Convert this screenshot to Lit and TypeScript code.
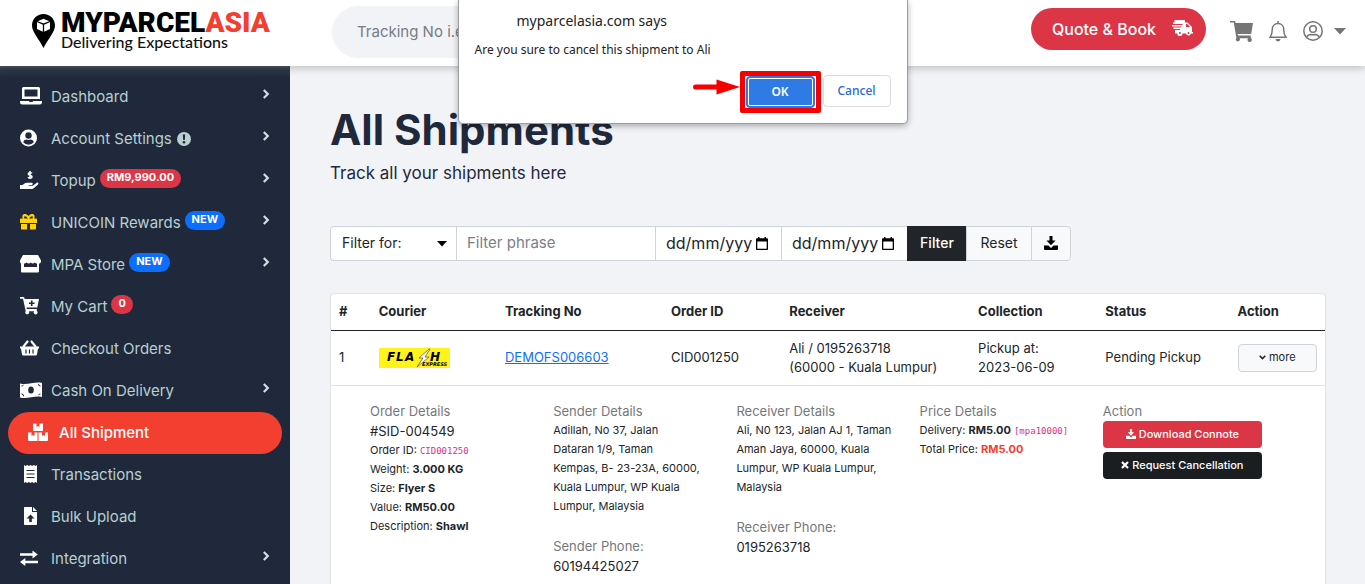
import { LitElement, html, svg, css, nothing } from "lit";
import { customElement, property } from "lit/decorators.js";
import { classMap } from "lit/directives/class-map.js";

const icons: Record<string, unknown> = {
  laptop: svg`<path fill-rule="evenodd" d="M3.500 1h15a1.500 1.500 0 0 1 1.500 1.500V13H2V2.500A1.500 1.500 0 0 1 3.500 1zM4.500 3.500v7h13v-7z"/><path d="M0 15h9c0 .8.500 1 1 1h2c.6 0 1-.3 1-1h9v1a2.500 2.500 0 0 1-2.500 2.500h-17A2.500 2.500 0 0 1 0 16z"/>`,
  user: svg`<circle cx="8.500" cy="10" r="8.500"/><circle cx="8.500" cy="7.500" r="3.200" fill="#1f293b"/><path fill="#1f293b" d="M3.200 14.300c.5-2 1.900-2.700 3.300-2.700.7.300 1.300.4 2 .4s1.300-.1 2-.4c1.400 0 2.800.7 3.300 2.700a7 7 0 0 1-10.600 0z"/>`,
  hand: svg`<path d="M0 13h2.600l1.500-1.200c.9-.7 1.900-1 3-1h4.600c1.400 0 1.500 2 .1 2.200H8.700v.8h4.200l3.600-2.900c1.400-.9 2.700.6 1.500 1.700l-4.300 3.700c-.5.500-1.100.7-1.800.7H0z" transform="translate(0 2)"/><path d="M12 3.300c-.5-.7-3.600-1.200-3.800.5-.2 1.800 3.900 1 3.800 3-.2 1.800-3.300 1.400-4.100.5M10 1v8" fill="none" stroke="#fff" stroke-width="1.500"/>`,
  gift: svg`<g fill="#ffd20a"><path fill-rule="evenodd" d="M1 6.500h1.800C1 2.500 5 .3 8.500 4 12 .3 16 2.500 14.200 6.500H16c.6 0 1 .4 1 1V11H0V7.500c0-.6.400-1 1-1zm3.500 0h3.200C6 3.200 3 3.700 4.500 6.500zm4.800 0h3.200c1.500-2.800-1.500-3.300-3.200 0z"/><path d="M1 12h6v5.500H2c-.6 0-1-.4-1-1zM10 12h6v4.500c0 .6-.4 1-1 1h-5z"/></g>`,
  store: svg`<path d="M3 1h15l3 5.500c.3 1.800-.5 3-2 3.200V17c0 .8-.5 1.500-1.500 1.500H2.500C1.500 18.500 1 18 1 17V9.500C0 9 0 8 0 6.500z"/><path fill="#1f293b" d="M4 9.500c1.200 0 2-.5 2.500-1 1.600 1.300 3 1.300 4.200 0 1.300 1.300 2.700 1.300 4 0 .6.600 1.300 1 2.300 1V13H4z"/>`,
  cartPlus: svg`<path d="M0 1h3.500c.4 0 .8.300.9.700L4.600 3H19l-1.700 8.500H6.500l.3 1.500H17l-.3 1.800a2 2 0 1 1-2.700.5H9a2 2 0 1 1-3.300-.3L3 2.800H0z"/><path d="M11.700 4.500v5.500M9 7.300h5.500" stroke="#1f293b" stroke-width="1.600"/>`,
  basket: svg`<path d="M0 8.500h19v2h-1l-1 6c-.2.600-.6 1-1.200 1H3.200c-.6 0-1-.4-1.200-1l-1-6H0z"/><path d="M3.500 8.500 7.500 3.500M15.500 8.500 11.500 3.500" stroke="#fff" stroke-width="2.200" stroke-linecap="round"/><path d="M6 11.500v4M9.500 11.500v4M13 11.500v4" stroke="#1f293b" stroke-width="1.200"/>`,
  money: svg`<path d="M0 3.500c7.500 2.200 14.500-2.300 22-.5v14c-7.500-1.800-14.500 2.500-22 .5z"/><ellipse cx="11" cy="10" rx="2.800" ry="3.600" fill="#1f293b"/><path d="M1.500 6a2 2 0 0 0 2-1.300M20.500 14a2 2 0 0 0-2 1.200M1.500 14a2 2 0 0 1 2 2.300M20.500 6a2 2 0 0 1-2-2.100" stroke="#1f293b" fill="none"/>`,
  boxes: svg`<path d="M5 1.500h3.500V5l1.500-1 1.500 1V1.500H15v7.500H5zM0 10.500h3.500V14L5 13l1.500 1v-3.500h3V19H1a1 1 0 0 1-1-1zM10.500 10.500H14V14l1.500-1 1.500 1v-3.500h3V18a1 1 0 0 1-1 1h-8.500z"/>`,
  receipt: svg`<path d="M4 1l1.600 1 1.600-1 1.700 1 1.600-1 1.600 1 1.700-1 1.600 1L17 1v18l-1.600-1-1.600 1-1.700-1-1.600 1-1.600-1-1.700 1-1.600-1L4 19z"/><path d="M6.500 6.500h8M6.500 10h8M6.500 13.500h8" stroke="#1f293b" stroke-width="1.200"/>`,
  file: svg`<path d="M5 1h7v5h5v12c0 .6-.4 1-1 1H5c-.6 0-1-.4-1-1V2c0-.6.400-1 1-1z"/><path d="M13 1l4 4h-4z"/><path fill="#1f293b" d="M10.500 8.500l4 4h-2.700V16H9.200v-3.500H6.500z"/>`,
  exchange: svg`<path d="M0 5.200h12.500V2.500l5.300 4-5.300 4V7.800H0zM18 12.700H5.300V10L0 14l5.300 4v-2.700H18z"/>`,
};

interface NavEntry {
  icon: string;
  label: string;
  badge?: string;
  tone?: string;
  info?: boolean;
  more?: boolean;
  active?: boolean;
}

const navEntries: NavEntry[] = [
  { icon: "laptop", label: "Dashboard", more: true },
  { icon: "user", label: "Account Settings", info: true, more: true },
  { icon: "hand", label: "Topup", badge: "RM9,990.00", tone: "red", more: true },
  { icon: "gift", label: "UNICOIN Rewards", badge: "NEW", tone: "blue", more: true },
  { icon: "store", label: "MPA Store", badge: "NEW", tone: "blue", more: true },
  { icon: "cartPlus", label: "My Cart", badge: "0", tone: "red" },
  { icon: "basket", label: "Checkout Orders" },
  { icon: "money", label: "Cash On Delivery", more: true },
  { icon: "boxes", label: "All Shipment", active: true },
  { icon: "receipt", label: "Transactions" },
  { icon: "file", label: "Bulk Upload" },
  { icon: "exchange", label: "Integration", more: true },
];

const downloadIcon = (cls: string) => html`<svg class=${cls} viewBox="0 0 14 14" aria-hidden="true">
  <path fill="currentColor" d="M5.500 0h3v4.500h3L7 9.300 2.500 4.500h3zM0 9.500h4.500L7 12l2.500-2.500H14V13a1 1 0 0 1-1 1H1a1 1 0 0 1-1-1z" />
</svg>`;

@customElement("side-nav")
class SideNav extends LitElement {
  static styles = css`
    :host {
      display: block;
      background: linear-gradient(#4d5866, #2d3848 4px, #1f293b 12px);
      padding-top: 10px;
      font-size: 15px;
    }
    .item {
      display: flex;
      align-items: center;
      height: 42px;
      padding: 0 20px;
      color: #b9cfd0;
      text-decoration: none;
    }
    .active {
      margin: 0 8px;
      border-radius: 21px;
      background: #f33f30;
      color: #fff;
      font-weight: 500;
    }
    .icon {
      width: 22px;
      height: 20px;
      margin: 0 9px 2px 0;
      fill: #fff;
    }
    .label { margin-bottom: 1px; }
    .info {
      width: 14px;
      height: 14px;
      margin-left: 5px;
    }
    .badge {
      height: 19px;
      margin: 0 0 6px 4px;
      padding: 0 7px;
      border-radius: 10px;
      color: #fff;
      font-size: 11px;
      font-weight: 700;
      line-height: 17px;
    }
    .red { background: #dc3545; }
    .blue { background: #0d6efd; }
    .chevron {
      width: 8px;
      height: 10px;
      margin: 0 0 6px auto;
    }
  `;

  render() {
    return html`<nav aria-label="Main">
      ${navEntries.map(
        (n) => html`<a href="#" class=${classMap({ item: true, active: !!n.active })}>
          <svg class="icon" viewBox="0 0 22 20" aria-hidden="true">${icons[n.icon]}</svg>
          <span class="label">${n.label}</span>
          ${n.info
            ? html`<svg class="info" viewBox="0 0 14 14" aria-hidden="true"><circle cx="7" cy="7" r="7" fill="#b9cfd0" /><path d="M5.800 2.500h2.400l-.4 5.500H6.200z" fill="#1f293b" /><circle cx="7" cy="10.300" r="1.300" fill="#1f293b" /></svg>`
            : nothing}
          ${n.badge ? html`<span class="badge ${n.tone}">${n.badge}</span>` : nothing}
          ${n.more
            ? html`<svg class="chevron" viewBox="0 0 8 10" aria-hidden="true"><path d="M1.800 1l4 4-4 4" fill="none" stroke="#cfe0e2" stroke-width="2.200" /></svg>`
            : nothing}
        </a>`
      )}
    </nav>`;
  }
}

@customElement("top-bar")
class TopBar extends LitElement {
  static styles = css`
    :host {
      display: flex;
      align-items: center;
      height: 66px;
      box-sizing: border-box;
      padding-right: 19px;
      background: #fff;
      box-shadow: 0 2px 8px rgba(0, 0, 0, 0.22);
      z-index: 1;
    }
    .brand {
      display: flex;
      align-items: center;
      width: 300px;
      margin-bottom: 4px;
      padding-left: 32px;
      box-sizing: border-box;
      color: #000;
      text-decoration: none;
    }
    .pin {
      width: 23px;
      height: 35px;
      margin-right: 6px;
    }
    .name {
      display: block;
      font: 900 28px/22px Roboto, sans-serif;
    }
    .asia { color: #f33f30; }
    .tagline {
      display: block;
      font: 500 16px/16px Lato, sans-serif;
      color: #111;
    }
    .search {
      width: 480px;
      height: 52px;
      box-sizing: border-box;
      margin: 0 auto 2px 32px;
      padding: 0 25px 2px;
      border: 0;
      border-radius: 26px;
      background: #f2f3f7;
      font: inherit;
      font-size: 15px;
    }
    .search::placeholder { color: #777c83; }
    .quote {
      display: flex;
      align-items: center;
      height: 42px;
      margin: 0 24px 8px 0;
      padding: 0 13px 0 21px;
      border: 0;
      border-radius: 21px;
      background: #dc3545;
      color: #fff;
      font: inherit;
      font-size: 16px;
      font-weight: 500;
    }
    .truck {
      width: 21px;
      height: 16px;
      margin: 0 0 2px 16px;
    }
    .tool {
      display: flex;
      align-items: center;
      padding: 0;
      border: 0;
      background: none;
      margin: 0 16px 4px 0;
      color: #757575;
    }
    .account { margin-right: 0; }
    .caret { margin-left: 11px; }
  `;

  render() {
    return html`
      <a class="brand" href="#">
        <svg class="pin" viewBox="0 0 23 35" aria-hidden="true">
          <path d="M11.500 0C5 0 0 5 0 11.500 0 18 7 25 11.500 34 16 25 23 18 23 11.500 23 5 18 0 11.500 0z" />
          <path d="M5 7.500l6.500-2.700L18 7.500V15l-6.500 3L5 15z" fill="#fff" />
          <path d="M5 7.500l6.500 2.700L18 7.500M11.500 10.200V18" fill="none" stroke="#000" stroke-width="1.300" />
        </svg>
        <span><span class="name">MYPARCEL<span class="asia">ASIA</span></span><span class="tagline">Delivering Expectations</span></span>
      </a>
      <input class="search" type="search" aria-label="Tracking number" placeholder="Tracking No i.e MPA123456" />
      <button class="quote">
        Quote &amp; Book
        <svg class="truck" viewBox="0 0 21 16" aria-hidden="true">
          <path fill="#fff" d="M2.500 0H12c.6 0 1 .4 1 1v1.500h2.500L20 7v5h1v1.500h-2a2.600 2.600 0 0 1-5 0h-3.500a2.600 2.600 0 0 1-5.200 0H3V10h5V9H1.500V7.500H9v-1H0V5h10.500V4H1V2.500h1.500z" />
          <path fill="#dc3545" d="M14 4h1.200l3 3H14z" /><circle cx="7.900" cy="13" r="1" fill="#dc3545" /><circle cx="16.500" cy="13" r="1" fill="#dc3545" />
        </svg>
      </button>
      <button class="tool" aria-label="Cart">
        <svg width="23" height="21" viewBox="0 0 23 21"><path fill="currentColor" d="M0 0h5l.6 2H23l-1.800 11H7.700l.4 1.500h12.700V17a2.100 2.100 0 1 1-2.600.3H9.600A2 2 0 1 1 6.400 17L3.800 1.500H0z" /></svg>
      </button>
      <button class="tool" aria-label="Notifications">
        <svg width="18" height="21" viewBox="0 0 18 21"><path d="M9 0v2.500M9 2.500c-3.500 0-5.700 2.500-5.700 5.700 0 4.500-1 6.300-2.300 8h16c-1.300-1.700-2.300-3.500-2.300-8 0-3.200-2.200-5.700-5.700-5.700z" fill="none" stroke="currentColor" stroke-width="1.500" /><path d="M6.500 18h5a2.500 2.500 0 0 1-5 0z" fill="currentColor" /></svg>
      </button>
      <button class="tool account" aria-label="Account">
        <svg width="20" height="20" viewBox="0 0 20 20" fill="none" stroke="currentColor" stroke-width="1.500"><circle cx="10" cy="10" r="9.200" /><circle cx="10" cy="8" r="3.300" /><path d="M3.800 16.200c1-2.200 2.600-2.700 4-2.700 1.500.5 2.900.5 4.400 0 1.400 0 3 .5 4 2.700" /></svg>
        <svg class="caret" width="12" height="7" viewBox="0 0 12 7"><path fill="currentColor" d="M0 0h12L6 6.500z" /></svg>
      </button>
    `;
  }
}

@customElement("filter-bar")
class FilterBar extends LitElement {
  static styles = css`
    :host {
      display: flex;
      height: 35px;
      max-width: 741px;
    }
    .cell {
      box-sizing: border-box;
      border: 1px solid #ced4da;
      border-right-width: 0;
      background: #fff;
      color: #212529;
      font: inherit;
      font-size: 14px;
      min-width: 0;
    }
    .pick {
      display: grid;
      align-items: center;
      flex: 0 0 126px;
      border-radius: 4px 0 0 4px;
    }
    .pick > * { grid-area: 1 / 1; }
    .select {
      appearance: none;
      width: 100%;
      height: 100%;
      padding: 0 11px 2px;
      border: 0;
      background: none;
      color: inherit;
      font: inherit;
    }
    .arrow {
      justify-self: end;
      margin-right: 9px;
      pointer-events: none;
    }
    .phrase {
      flex: 1 1 200px;
      padding: 0 10px 2px;
      font-size: 15px;
    }
    .phrase::placeholder { color: #7b8086; }
    .date {
      display: flex;
      align-items: center;
      justify-content: space-between;
      flex: 0 0 126px;
      padding: 0 13px 0 10px;
    }
    .day {
      width: 88px;
      padding: 0 0 2px;
      border: 0;
      background: none;
      font: inherit;
      font-size: 16px;
    }
    .day::placeholder { color: #212529; }
    .go {
      flex: 0 0 59px;
      padding: 0 0 2px;
      background: #212529;
      border-color: #212529;
      color: #fff;
      font-weight: 500;
    }
    .light {
      flex: 0 0 65px;
      padding: 0 0 2px;
      background: #f8f9fa;
    }
    .export {
      flex-basis: 40px;
      border-right-width: 1px;
      border-radius: 0 4px 4px 0;
      color: #000;
    }
    .dl {
      width: 14px;
      height: 14px;
      vertical-align: -2px;
    }
  `;

  private date(label: string) {
    return html`<label class="cell date">
      <input class="day" type="text" aria-label=${label} placeholder="dd/mm/yyy" />
      <svg width="12" height="13" viewBox="0 0 12 13" aria-hidden="true"><path fill-rule="evenodd" d="M0 2.500C0 1.700.5 1.200 1.200 1.200H2V0h1.500v1.200h5V0H10v1.200h.8c.7 0 1.200.5 1.200 1.300V12c0 .6-.4 1-1 1H1c-.6 0-1-.4-1-1zM1.300 4.500v7.200h9.400V4.500z" /></svg>
    </label>`;
  }

  render() {
    return html`
      <div class="cell pick">
        <select class="select" aria-label="Filter for">
          <option>Filter for:</option>
        </select>
        <svg class="arrow" width="10" height="6" viewBox="0 0 10 6" aria-hidden="true"><path d="M0 0h10L5 5.500z" /></svg>
      </div>
      <input class="cell phrase" type="text" aria-label="Filter phrase" placeholder="Filter phrase" />
      ${this.date("From date")} ${this.date("To date")}
      <button class="cell go">Filter</button>
      <button class="cell light">Reset</button>
      <button class="cell light export" aria-label="Download">${downloadIcon("dl")}</button>
    `;
  }
}

@customElement("shipment-table")
class ShipmentTable extends LitElement {
  static styles = css`
    :host {
      display: block;
      border: 1px solid #dee2e6;
      border-radius: 4px;
      background: #fff;
      color: #212529;
    }
    .table {
      width: 100%;
      border-collapse: collapse;
      table-layout: fixed;
      font-size: 13px;
      line-height: 19px;
    }
    .head {
      box-sizing: border-box;
      height: 36px;
      padding: 0 8px;
      border-bottom: 1px solid #212529;
      text-align: left;
      font-weight: 700;
      white-space: nowrap;
    }
    .cell {
      box-sizing: border-box;
      height: 55px;
      padding: 0 8px;
      border-bottom: 1px solid #dee2e6;
      white-space: nowrap;
    }
    .full { padding: 0; }
    .n { width: 4%; }
    .courier { width: 12.700%; }
    .track { width: 16.700%; }
    .order { width: 11.900%; }
    .receiver { width: 19%; }
    .collect { width: 12.800%; }
    .status { width: 13.300%; }
    .link { color: #0d6efd; }
    .flash {
      display: block;
      width: 71px;
      height: 20px;
      background: #fff319;
    }
    .letter { font: italic 900 12px "DejaVu Sans", sans-serif; }
    .express { font: italic 700 5px "DejaVu Sans", sans-serif; }
    .more {
      display: flex;
      align-items: center;
      justify-content: center;
      gap: 3px;
      width: 100%;
      height: 28px;
      padding: 0;
      border: 1px solid #ced4da;
      border-radius: 4px;
      background: #f8f9fa;
      color: #212529;
      font: inherit;
      font-size: 11px;
    }
    .details {
      display: grid;
      grid-template-columns: repeat(5, 1fr);
      padding: 15px 39px 24px;
      font-size: 11px;
    }
    .group { padding-right: 24px; }
    .title {
      margin: 0;
      color: #75787b;
      font-size: 13px;
      font-weight: 400;
      line-height: 20px;
    }
    .big {
      margin: 0;
      font-size: 13px;
      line-height: 20px;
    }
    .line {
      margin: 0;
      white-space: nowrap;
    }
    .text { margin: 0 0 20px; }
    .code {
      color: #d63384;
      font: 9px "DejaVu Sans Mono", monospace;
    }
    .total { color: #f33f30; }
    .wide {
      display: flex;
      align-items: center;
      justify-content: center;
      gap: 3px;
      width: 100%;
      height: 27px;
      margin-bottom: 4px;
      padding: 0;
      border: 0;
      border-radius: 4px;
      background: #dc3545;
      color: #fff;
      font: inherit;
      font-size: 11px;
      font-weight: 500;
    }
    .dark { background: #1a1e21; }
    .dl {
      width: 10px;
      height: 10px;
    }
  `;

  render() {
    return html`
      <table class="table">
        <thead>
          <tr>
            <th class="head n">#</th>
            <th class="head courier">Courier</th>
            <th class="head track">Tracking No</th>
            <th class="head order">Order ID</th>
            <th class="head receiver">Receiver</th>
            <th class="head collect">Collection</th>
            <th class="head status">Status</th>
            <th class="head">Action</th>
          </tr>
        </thead>
        <tbody>
          <tr>
            <td class="cell">1</td>
            <td class="cell">
              <svg class="flash" viewBox="0 0 71 20" role="img" aria-label="Flash Express">
                <text class="letter" x="8" y="13">F</text><text class="letter" x="17" y="13">L</text><text class="letter" x="26" y="13">A</text><text class="letter" x="51" y="13">H</text>
                <text class="express" x="43" y="18">EXPRESS</text>
                <path d="M50 1l-10 9h4l-6 9 12-10h-4l5-8z" fill="#fff" stroke="#333" stroke-width=".6" />
              </svg>
            </td>
            <td class="cell"><a class="link" href="#">DEMOFS006603</a></td>
            <td class="cell">CID001250</td>
            <td class="cell">Ali / 0195263718<br />(60000 - Kuala Lumpur)</td>
            <td class="cell">Pickup at:<br />2023-06-09</td>
            <td class="cell">Pending Pickup</td>
            <td class="cell">
              <button class="more">
                <svg width="7" height="5" viewBox="0 0 7 5" aria-hidden="true"><path d="M.7.700l2.800 2.800L6.300.700" fill="none" stroke="#212529" stroke-width="1.600" /></svg>more
              </button>
            </td>
          </tr>
          <tr>
            <td class="full" colspan="8">
              <div class="details">
                <section class="group">
                  <h2 class="title">Order Details</h2>
                  <p class="big">#SID-004549</p>
                  <p class="line">Order ID: <code class="code">CID001250</code></p>
                  <p class="line">Weight: <b>3.000 KG</b></p>
                  <p class="line">Size: <b>Flyer S</b></p>
                  <p class="line">Value: <b>RM50.00</b></p>
                  <p class="line">Description: <b>Shawl</b></p>
                </section>
                <section class="group">
                  <h2 class="title">Sender Details</h2>
                  <p class="text">Adillah, No 37, Jalan<br />Dataran 1/9, Taman<br />Kempas, B- 23-23A, 60000,<br />Kuala Lumpur, WP Kuala<br />Lumpur, Malaysia</p>
                  <h2 class="title">Sender Phone:</h2>
                  <p class="big">60194425027</p>
                </section>
                <section class="group">
                  <h2 class="title">Receiver Details</h2>
                  <p class="text">Ali, N0 123, Jalan AJ 1, Taman<br />Aman Jaya, 60000, Kuala<br />Lumpur, WP Kuala Lumpur,<br />Malaysia</p>
                  <h2 class="title">Receiver Phone:</h2>
                  <p class="big">0195263718</p>
                </section>
                <section class="group">
                  <h2 class="title">Price Details</h2>
                  <p class="line">Delivery: <b>RM5.00</b> <code class="code">[mpa10000]</code></p>
                  <p class="line">Total Price: <b class="total">RM5.00</b></p>
                </section>
                <section class="group">
                  <h2 class="title">Action</h2>
                  <button class="wide">${downloadIcon("dl")}Download Connote</button>
                  <button class="wide dark">
                    <svg width="8" height="8" viewBox="0 0 8 8" aria-hidden="true"><path d="M1 1l6 6M7 1L1 7" stroke="#fff" stroke-width="2.200" /></svg>Request Cancellation
                  </button>
                </section>
              </div>
            </td>
          </tr>
        </tbody>
      </table>
    `;
  }
}

@customElement("confirm-dialog")
class ConfirmDialog extends LitElement {
  @property() origin = "";
  @property() message = "";

  static styles = css`
    :host {
      display: block;
      box-sizing: border-box;
      padding: 11px 16px;
      border: 1px solid #9b9da0;
      border-top: 0;
      border-radius: 0 0 5px 5px;
      background: #fff;
      box-shadow: 0 2px 6px rgba(0, 0, 0, 0.3);
      color: #222;
      font-family: "Noto Sans", sans-serif;
    }
    .origin {
      margin: 0 0 10px 42px;
      font-size: 14px;
      font-weight: 400;
      line-height: 20px;
    }
    .message {
      margin: 0;
      font-size: 12px;
      line-height: 18px;
    }
    .actions {
      display: flex;
      align-items: center;
      justify-content: flex-end;
      height: 42px;
      margin-top: 12px;
    }
    .arrow {
      margin-bottom: 11px;
    }
    .frame {
      display: flex;
      margin-right: 2px;
      padding: 0 1px;
      border: 5px solid #f80000;
      border-radius: 2px;
    }
    .ok {
      width: 69px;
      height: 32px;
      padding: 0 0 2px;
      border: 1px solid #2b78e4;
      outline: 1px solid #fff;
      outline-offset: -3px;
      border-radius: 4px;
      background: #2f7be5;
      color: #fff;
      font: 600 12px "Noto Sans", sans-serif;
    }
    .cancel {
      width: 68px;
      height: 32px;
      margin-bottom: 2px;
      padding: 0 0 1px;
      border: 1px solid #dadce0;
      border-radius: 4px;
      background: #fff;
      color: #2a66dd;
      font: 500 12px "Noto Sans", sans-serif;
    }
  `;

  render() {
    return html`
      <h2 class="origin">${this.origin} says</h2>
      <p class="message">${this.message}</p>
      <div class="actions">
        <svg class="arrow" width="47" height="16" viewBox="0 0 47 16" aria-hidden="true"><path d="M2.500 8H26" stroke="#f80000" stroke-width="5" stroke-linecap="round" /><path d="M23.500.500L47 8l-23.500 7.500z" fill="#f80000" /></svg>
        <span class="frame"><button class="ok">OK</button></span>
        <button class="cancel">Cancel</button>
      </div>
    `;
  }
}

@customElement("app-root")
class AppRoot extends LitElement {
  static styles = css`
    :host {
      display: grid;
      grid-template: auto 1fr / 290px 1fr;
      height: 100vh;
      overflow: hidden;
      background: #f2f3f7;
      color: #1f293b;
      font-family: Inter, sans-serif;
    }
    .top { grid-column: 1 / -1; }
    .main {
      min-width: 0;
      overflow: auto;
      scrollbar-width: none;
      padding: 34px 39px 24px 40px;
    }
    .heading {
      margin: 0;
      font-size: 42px;
      font-weight: 700;
      line-height: 60px;
    }
    .lead {
      margin: 3px 0 43px;
      font-size: 17px;
      line-height: 20px;
    }
    .filters { margin-bottom: 32px; }
    .dialog {
      position: absolute;
      z-index: 2;
      top: 0;
      left: calc(50% - 225px);
      width: 450px;
      height: 124px;
    }
  `;

  render() {
    return html`
      <top-bar class="top"></top-bar>
      <side-nav></side-nav>
      <main class="main">
        <h1 class="heading">All Shipments</h1>
        <p class="lead">Track all your shipments here</p>
        <filter-bar class="filters"></filter-bar>
        <shipment-table></shipment-table>
      </main>
      <confirm-dialog class="dialog" role="dialog" origin="myparcelasia.com" message="Are you sure to cancel this shipment to Ali"></confirm-dialog>
    `;
  }
}
